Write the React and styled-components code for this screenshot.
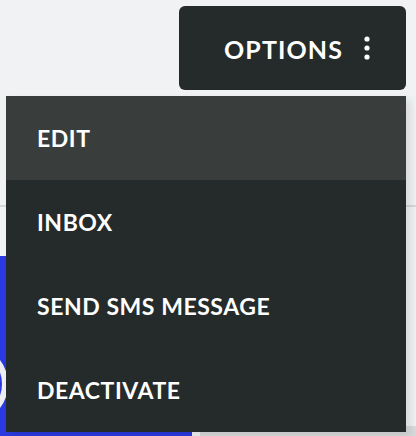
import styled, { createGlobalStyle } from 'styled-components';

const GlobalStyle = createGlobalStyle`
  html, body {
    margin: 0;
    padding: 0;
    background: #f1f2f4;
  }
  body {
    font-family: "Lato", "Liberation Sans", sans-serif;
  }
`;

const menuItems = [
  { id: 'edit', label: 'EDIT', active: true },
  { id: 'inbox', label: 'INBOX' },
  { id: 'sms', label: 'SEND SMS MESSAGE' },
  { id: 'deactivate', label: 'DEACTIVATE' },
];

const DotsIcon = () => (
  <svg width="6" height="24" viewBox="0 0 6 24" fill="currentColor">
    <circle cx="3" cy="3" r="2.6" />
    <circle cx="3" cy="12" r="2.6" />
    <circle cx="3" cy="21" r="2.6" />
  </svg>
);

const App = () => {
  return (
    <>
      <GlobalStyle />
      <Page>
        <TopBar>
          <OptionsWrap>
            <OptionsButton>
              <span>OPTIONS</span>
              <DotsIcon />
            </OptionsButton>

            {/* 드롭다운 메뉴 */}
            <Dropdown>
              {menuItems.map((item) => (
                <DropdownItem key={item.id} $active={item.active}>
                  {item.label}
                </DropdownItem>
              ))}
            </Dropdown>
          </OptionsWrap>
        </TopBar>

        <Content>
          <Divider />
          <BottomRow>
            <BlueCard>
              <Avatar />
            </BlueCard>
            <GreyCard />
          </BottomRow>
        </Content>
      </Page>
    </>
  );
};

export default App;

const Page = styled.div`
  width: 416px;
  height: 436px;
  overflow: hidden;
  background: #f1f2f4;
  display: flex;
  flex-direction: column;
`;

const TopBar = styled.div`
  display: flex;
  justify-content: flex-end;
  padding: 6px 10px 0 0;
  position: relative;
  z-index: 5;
`;

const OptionsWrap = styled.div`
  position: relative;
`;

const OptionsButton = styled.button`
  width: 227px;
  height: 84px;
  box-sizing: border-box;
  display: flex;
  align-items: center;
  justify-content: flex-end;
  gap: 21px;
  padding: 2px 36px 0 0;
  background: #252b2b;
  color: #ffffff;
  border: none;
  border-radius: 6px;
  font-family: "Lato", "Liberation Sans", sans-serif;
  font-weight: 700;
  font-size: 25px;
  letter-spacing: 1.1px;
  cursor: pointer;

  svg {
    margin-top: -2px;
  }
`;

const Dropdown = styled.div`
  position: absolute;
  top: 90px;
  right: 0;
  width: 400px;
  background: #252b2a;
  box-shadow: 5px 4px 8px rgba(0, 0, 0, 0.1);
  display: flex;
  flex-direction: column;
`;

const DropdownItem = styled.div`
  height: 84px;
  display: flex;
  align-items: center;
  padding-left: 31px;
  color: #ffffff;
  font-weight: 700;
  font-size: 23px;
  letter-spacing: 0.55px;
  background: ${(props) => (props.$active ? '#393e3c' : 'transparent')};
  cursor: pointer;
`;

const Content = styled.div`
  flex: 1;
  display: flex;
  flex-direction: column;
`;

const Divider = styled.div`
  margin-top: 115px;
  height: 2px;
  width: 100%;
  background: #d6d7da;
`;

const BottomRow = styled.div`
  flex: 1;
  display: flex;
  gap: 8px;
  margin-top: 49px;
`;

const BlueCard = styled.div`
  width: 192px;
  background: #2b3ae0;
  position: relative;
  overflow: hidden;
`;

const Avatar = styled.div`
  position: absolute;
  left: -72px;
  top: 88px;
  width: 80px;
  height: 80px;
  border-radius: 50%;
  border: 6px solid #eceef1;
  box-sizing: border-box;
`;

const GreyCard = styled.div`
  flex: 1;
  margin-top: 170px;
  background: #d9dadc;
`;
